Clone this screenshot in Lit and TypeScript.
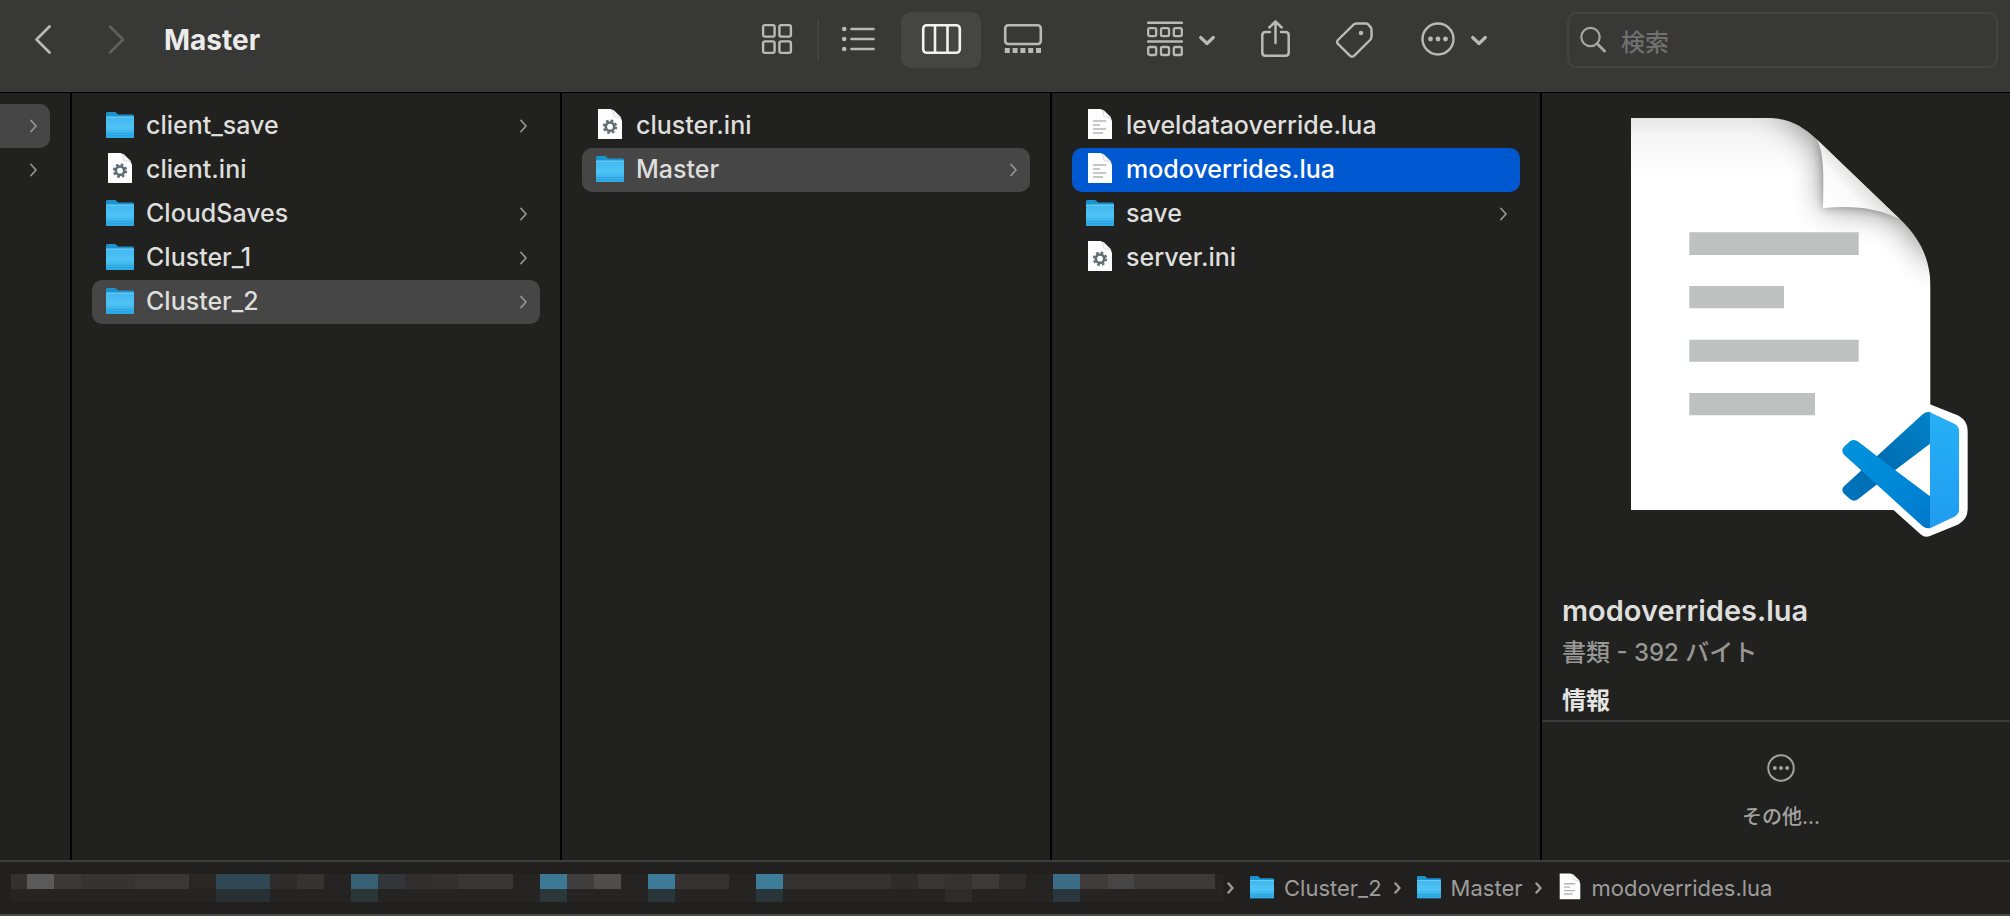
import { LitElement, html, css, svg, nothing } from "lit";
import { customElement, property, state } from "lit/decorators.js";
import { classMap } from "lit/directives/class-map.js";

type Kind = "folder" | "config" | "text";
interface Entry {
  name: string;
  kind: Kind;
}

const LIBRARY: Entry[][] = [
  [
    { name: "client_save", kind: "folder" },
    { name: "client.ini", kind: "config" },
    { name: "CloudSaves", kind: "folder" },
    { name: "Cluster_1", kind: "folder" },
    { name: "Cluster_2", kind: "folder" },
  ],
  [
    { name: "cluster.ini", kind: "config" },
    { name: "Master", kind: "folder" },
  ],
  [
    { name: "leveldataoverride.lua", kind: "text" },
    { name: "modoverrides.lua", kind: "text" },
    { name: "save", kind: "folder" },
    { name: "server.ini", kind: "config" },
  ],
];

const PATH: Entry[] = [
  { name: "Cluster_2", kind: "folder" },
  { name: "Master", kind: "folder" },
  { name: "modoverrides.lua", kind: "text" },
];

/* Redacted part of the path: start, end, colour of each tile. */
const TILES_TOP: [number, number, string][] = [
  [0, 16, "#333231"], [16, 43, "#5a5a5a"], [43, 70, "#3a3937"], [70, 124, "#353433"],
  [124, 178, "#393836"], [178, 205, "#292624"], [205, 259, "#2f4853"], [259, 286, "#2f2b2a"],
  [286, 313, "#363431"], [340, 367, "#366175"], [367, 394, "#32353a"], [394, 421, "#322e2d"],
  [421, 448, "#343230"], [448, 502, "#393735"], [529, 556, "#3d7995"], [556, 583, "#3f3e3c"],
  [583, 610, "#4f4e4c"], [637, 664, "#3c7a98"], [664, 718, "#353230"], [745, 772, "#3d7d97"],
  [772, 880, "#353331"], [880, 907, "#2f2b2a"], [907, 934, "#373634"], [934, 961, "#343331"],
  [961, 988, "#3c3b39"], [988, 1015, "#302d2b"], [1042, 1069, "#3d6d86"], [1069, 1097, "#3e3b39"],
  [1097, 1123, "#454545"], [1123, 1204, "#3c3b39"],
];
const TILES_BOTTOM: [number, number, string][] = [
  [205, 259, "#273033"], [340, 367, "#2b3637"], [529, 556, "#2a383c"], [637, 664, "#28363a"],
  [745, 772, "#28363a"], [934, 961, "#2e2c2a"], [1042, 1069, "#2b373e"],
];

const folderArt = svg`
  <path d="M0 33V9.500Q0 8 1.500 8H8.500Q9.500 8 10.300 8.800L12 10.500H26.500Q28 10.500 28 12V33Q28 34 27 34H1Q0 34 0 33Z" fill="#1c93cf"/>
  <path d="M0 13.600Q0 12.600 1 12.600H27Q28 12.600 28 13.600V33Q28 34 27 34H1Q0 34 0 33Z" fill="url(#face)"/>
  <path d="M0 13.200H28" stroke="#7fd6fb" stroke-width=".8"/>
  <path d="M0 29.500H28M0 31.500H28" stroke="#2ba0dc" stroke-width=".8"/>
  <defs><linearGradient id="face" x1="0" y1="0" x2="0" y2="1">
    <stop offset="0" stop-color="#40b6ee"/><stop offset=".5" stop-color="#50c4f6"/><stop offset="1" stop-color="#2ba8e3"/>
  </linearGradient></defs>`;
const sheetArt = svg`
  <path d="M2 5H14.500L18 6.500L24.500 13L26 17V35H2Z" fill="#fdfdfd"/>
  <path d="M16 5.700L17.500 12.500L25.300 14.500L24.500 13L18 6.500Z" fill="#d4d4d4"/>
  <path d="M17.300 6.300L18 12L24.700 13.300Z" fill="#f6f6f6"/>`;
const configArt = svg`${sheetArt}
  <circle cx="14" cy="22.700" r="4.200" fill="none" stroke="#5e6b70" stroke-width="2.600"/>
  <circle cx="14" cy="22.700" r="6.200" fill="none" stroke="#5e6b70" stroke-width="2" stroke-dasharray="2.600 2.269"/>`;
const textArt = svg`${sheetArt}
  <path d="M7 17H20M7 21H14M7 25H20M7 29H17" stroke="#b4b6b5" stroke-width="1.600"/>`;

const art = (kind: Kind) => (kind === "folder" ? folderArt : kind === "config" ? configArt : textArt);

const chevron = html`<svg class="chevron" width="7" height="14" viewBox="0 0 7 14" aria-hidden="true">
  <path d="M1 1.500L6 7L1 12.500" fill="none" stroke="currentColor" stroke-width="1.700" stroke-linecap="round" stroke-linejoin="round"/>
</svg>`;

const moreArt = svg`
  <circle cx="17" cy="17" r="15.500" fill="none" stroke="currentColor" stroke-width="2.400"/>
  <circle cx="9.500" cy="17" r="2.400" fill="currentColor"/><circle cx="17" cy="17" r="2.400" fill="currentColor"/><circle cx="24.500" cy="17" r="2.400" fill="currentColor"/>`;

const downArt = html`<svg width="16" height="40" viewBox="0 0 16 40" aria-hidden="true">
  <path d="M1.700 17.500L8 23.500L14.300 17.500" fill="none" stroke="currentColor" stroke-width="3.200" stroke-linecap="round" stroke-linejoin="round"/>
</svg>`;

@customElement("file-column")
class FileColumn extends LitElement {
  @property({ attribute: false }) entries: Entry[] = [];
  @property() chosen = "";
  @property({ type: Boolean }) active = false;

  static styles = css`
    :host { display: block; min-width: 0; padding: 11px 20px 0; }
    ul { list-style: none; margin: 0; padding: 0; }
    .row {
      display: flex; align-items: center; gap: 12px; box-sizing: border-box;
      width: 100%; height: 44px; padding: 0 13px 0 14px;
      border: 0; border-radius: 10px; background: none; color: #dededd;
      font: 500 25px/42px Inter, "Noto Sans CJK JP", sans-serif; text-align: left;
    }
    .row.on { background: #464646; }
    .row.on.active { background: #0058d0; color: #fff; }
    .glyph { flex: none; }
    .name { flex: 1; min-width: 0; padding-bottom: 2px; overflow: hidden; text-overflow: ellipsis; white-space: nowrap; }
    .chevron { flex: none; color: #969695; }
  `;

  render() {
    return html`<ul>
      ${this.entries.map((e) => {
        const on = e.name === this.chosen;
        return html`<li><button class=${classMap({ row: true, on, active: on && this.active })} @click=${() => (this.chosen = e.name)}>
          <svg class="glyph" width="28" height="44" viewBox="0 0 28 44" aria-hidden="true">${art(e.kind)}</svg>
          <span class="name">${e.name}</span>
          ${e.kind === "folder" ? chevron : nothing}
        </button></li>`;
      })}
    </ul>`;
  }
}

@customElement("file-preview")
class FilePreview extends LitElement {
  static styles = css`
    :host { display: flex; flex-direction: column; min-width: 0; overflow: hidden; }
    .art { display: block; width: 400px; max-width: 100%; margin: 0 auto; }
    .picture { padding-left: 10px; }
    .info { flex: 1; padding: 0 20px; color: #dededd; }
    h2, h3, p { margin: 0; font: 500 24px/36px Inter, "Noto Sans CJK JP", sans-serif; white-space: nowrap; }
    h2 { margin-top: 50px; font-size: 29px; font-weight: 600; }
    p { margin-top: 6px; color: #979796; }
    h3 { margin-top: 12px; font-weight: 700; color: #e4e4e3; }
    .actions { display: flex; justify-content: center; box-sizing: border-box; height: 140px; padding: 32px 0 0 10px; border-top: 2px solid #3a3a38; }
    .more {
      display: flex; flex-direction: column; align-items: center; gap: 20px; align-self: flex-start;
      padding: 0; border: 0; background: none; color: #a2a2a1;
      font: 500 20px/30px Inter, "Noto Sans CJK JP", sans-serif;
    }
  `;

  render() {
    return html`
      <div class="picture">
        <svg class="art" viewBox="123 9 1200 1350" role="img" aria-label="modoverrides.lua">
          <defs>
            <linearGradient id="top" x1="0" y1="84" x2="0" y2="260" gradientUnits="userSpaceOnUse">
              <stop offset="0" stop-color="#e6e6e6"/><stop offset=".3" stop-color="#f5f5f5"/><stop offset="1" stop-color="#fff"/>
            </linearGradient>
            <linearGradient id="curl" x1="850" y1="355" x2="960" y2="255" gradientUnits="userSpaceOnUse">
              <stop offset="0" stop-color="#fff"/><stop offset=".6" stop-color="#fafafa"/><stop offset="1" stop-color="#dcdcdc"/>
            </linearGradient>
            <linearGradient id="back" x1="1160" y1="970" x2="920" y2="1230" gradientUnits="userSpaceOnUse">
              <stop offset="0" stop-color="#0082c8"/><stop offset=".6" stop-color="#006bb0"/><stop offset="1" stop-color="#0074bd"/>
            </linearGradient>
            <linearGradient id="front" x1="920" y1="1060" x2="1170" y2="1310" gradientUnits="userSpaceOnUse">
              <stop offset="0" stop-color="#0092dc"/><stop offset=".6" stop-color="#0086d6"/><stop offset="1" stop-color="#0077c8"/>
            </linearGradient>
            <linearGradient id="side" x1="0" y1="0" x2="0" y2="1">
              <stop offset="0" stop-color="#27b0f6"/><stop offset="1" stop-color="#1f9cf0"/>
            </linearGradient>
            <filter id="soft" x="-50%" y="-50%" width="200%" height="200%"><feGaussianBlur stdDeviation="48"/></filter>
            <filter id="tight" x="-50%" y="-50%" width="200%" height="200%"><feGaussianBlur stdDeviation="12"/></filter>
            <clipPath id="page"><path d="M273 84H680C745 84 785 106 830 148L1080 388C1150 455 1172 520 1172 600V1261H273Z"/></clipPath>
          </defs>
          <g clip-path="url(#page)">
            <path d="M273 84H1172V1261H273Z" fill="url(#top)"/>
            <path d="M690 50L830 148C848 180 853 230 849 355C930 345 1010 352 1080 388L1200 540L1250 300L900 40Z" fill="#000" opacity=".46" filter="url(#soft)"/>
            <path d="M830 148C848 180 853 230 849 355C930 345 1010 352 1080 388Z" fill="#000" opacity=".3" filter="url(#tight)"/>
          </g>
          <path d="M830 148C848 180 853 230 849 355C930 345 1010 352 1080 388Z" fill="url(#curl)"/>
          <path d="M448 427H956V495H448ZM448 588H732V655H448ZM448 749H956V815H448ZM448 909H825V976H448Z" fill="#bec1c0"/>
          <path d="M1160 967L1243 1000Q1257 1008 1257 1022V1258Q1257 1272 1243 1280L1160 1314L1010 1180L942 1230L910 1200L965 1141L910 1082L942 1050L1010 1100Z" fill="#fff" stroke="#fff" stroke-width="52" stroke-linejoin="round"/>
          <path d="M1148 973Q1158 964 1172 967V1060L1066 1140L955 1227Q942 1237 930 1227L912 1211Q902 1200 912 1189Z" fill="url(#back)"/>
          <path d="M912 1070Q902 1082 912 1094L1148 1309Q1158 1317 1172 1314V1220L1066 1141L955 1055Q942 1046 930 1054Z" fill="url(#front)"/>
          <path d="M1170 967L1243 1001Q1257 1008 1257 1022V1260Q1257 1273 1243 1280L1170 1315Z" fill="url(#side)"/>
        </svg>
      </div>
      <div class="info">
        <h2>modoverrides.lua</h2>
        <p>書類 - 392 バイト</p>
        <h3>情報</h3>
      </div>
      <div class="actions">
        <button class="more">
          <svg width="28" height="28" viewBox="0 0 34 34" aria-hidden="true">${moreArt}</svg>
          その他...
        </button>
      </div>`;
  }
}

@customElement("app-root")
class AppRoot extends LitElement {
  @state() private view = "columns";

  static styles = css`
    :host {
      display: flex; flex-direction: column; box-sizing: border-box; min-height: 100vh;
      background: #21211f; color: #dededd; border-bottom: 2px solid #494946;
      font: 500 25px/36px Inter, "Noto Sans CJK JP", sans-serif;
    }
    button { padding: 0; border: 0; background: none; color: #b9b9b7; display: flex; align-items: center; justify-content: center; }
    svg { display: block; flex: none; }
    .toolbar {
      display: flex; align-items: center; box-sizing: border-box; height: 93px;
      padding: 0 12px 12px 34px; background: #383836; border-bottom: 1px solid #000;
    }
    .nav { display: flex; gap: 56px; padding-right: 38px; }
    .nav .forward { color: #60605e; }
    h1 { flex: 1; margin: 0; padding-bottom: 1px; font-size: 28px; font-weight: 700; color: #ebebea; white-space: nowrap; }
    .views { display: flex; align-items: center; margin-right: 84px; }
    .view { width: 80px; height: 56px; border-radius: 10px; margin-right: 2px; }
    .view:last-child { margin-right: 0; }
    .view.on { background: #454543; color: #f2f2f1; }
    .rule { width: 2px; height: 40px; background: #454543; margin-left: -2px; }
    .tools { display: flex; align-items: center; gap: 46px; margin-right: 80px; }
    .menu { gap: 16px; }
    .search {
      display: flex; align-items: center; gap: 15px; box-sizing: border-box; width: 431px; height: 56px;
      padding: 0 11px; border: 2px solid #434341; border-radius: 10px; color: #a5a5a4;
    }
    input { flex: 1; min-width: 0; padding: 5px 0 0; border: 0; outline: 0; background: none; color: #dededd; font: inherit; font-size: 24px; }
    input::placeholder { color: #70706f; opacity: 1; }
    .columns { flex: 1; display: grid; grid-template-columns: 72px repeat(3, minmax(0, 490fr)) minmax(0, 468fr); }
    .edge, file-column { border-right: 2px solid #000; }
    .edge { padding: 11px 20px 0 0; }
    .stub { width: 100%; height: 44px; padding-right: 13px; justify-content: flex-end; border-radius: 0 10px 10px 0; color: #969695; }
    .stub.on { background: #464646; }
    .path {
      display: flex; align-items: center; box-sizing: border-box; height: 54px; padding: 0 11px;
      border-top: 2px solid #3f3e3c; background: #22201e; color: #9d9c9a; overflow: hidden;
    }
    .path ol { display: flex; margin: 0; padding: 0; list-style: none; }
    .path li { display: flex; align-items: center; }
    .crumb { display: flex; align-items: center; gap: 10px; padding: 0 12px 0 16px; color: inherit; text-decoration: none; font-size: 22px; font-weight: 400; line-height: 30px; white-space: nowrap; }
  `;

  private readonly views = [
    { id: "icons", label: "アイコン", art: svg`<g fill="none" stroke="currentColor" stroke-width="2.400"><rect x="26.100" y="13.100" width="11.500" height="11.500" rx="1.800"/><rect x="42.400" y="13.100" width="11.500" height="11.500" rx="1.800"/><rect x="26.100" y="29.400" width="11.500" height="11.500" rx="1.800"/><rect x="42.400" y="29.400" width="11.500" height="11.500" rx="1.800"/></g>` },
    { id: "list", label: "リスト", art: svg`<g fill="currentColor"><circle cx="25.200" cy="17" r="2.300"/><circle cx="25.200" cy="27" r="2.300"/><circle cx="25.200" cy="37" r="2.300"/></g>
      <path d="M32.500 17H54.500M32.500 27H54.500M32.500 37H54.500" stroke="currentColor" stroke-width="2.600" stroke-linecap="round"/>` },
    { id: "columns", label: "カラム", art: svg`<g fill="none" stroke="currentColor" stroke-width="2.600"><rect x="22.200" y="13.200" width="36.600" height="27.600" rx="3.500"/><path d="M34 13V41M46.500 13V41"/></g>` },
    { id: "gallery", label: "ギャラリー", art: svg`<rect x="22.200" y="13.200" width="35.600" height="18.800" rx="3" fill="none" stroke="currentColor" stroke-width="2.600"/>
      <path d="M21.800 36h5v5h-5zM29.600 36h5v5h-5zM37.400 36h5v5h-5zM45.200 36h5v5h-5zM53 36h5v5h-5z" fill="currentColor"/>` },
  ];

  render() {
    return html`
      <header class="toolbar">
        <div class="nav">
          <button class="back" aria-label="戻る"><svg width="18" height="30" viewBox="0 0 18 30"><path d="M15.500 1.500L2.500 14.500L15.500 27.500" fill="none" stroke="currentColor" stroke-width="2.700" stroke-linecap="round" stroke-linejoin="round"/></svg></button>
          <button class="forward" aria-label="進む"><svg width="18" height="30" viewBox="0 0 18 30"><path d="M2 1.500L15 14.500L2 27.500" fill="none" stroke="currentColor" stroke-width="2.500" stroke-linecap="round" stroke-linejoin="round"/></svg></button>
        </div>
        <h1>Master</h1>
        <div class="views">
          ${this.views.map((v, i) => html`
            <button class=${classMap({ view: true, on: v.id === this.view })} aria-label=${v.label} @click=${() => (this.view = v.id)}>
              <svg width="80" height="56" viewBox="0 0 80 56" aria-hidden="true">${v.art}</svg>
            </button>${i === 0 ? html`<span class="rule"></span>` : nothing}`)}
        </div>
        <div class="tools">
          <button class="menu" aria-label="グループ">
            <svg width="36" height="40" viewBox="0 0 36 40" aria-hidden="true">
              <path d="M1 2.700H35M1 21.500H35" stroke="currentColor" stroke-width="2.400" stroke-linecap="round"/>
              <g fill="none" stroke="currentColor" stroke-width="2.300"><rect x="1.200" y="8.100" width="8" height="8" rx="1.500"/><rect x="14" y="8.100" width="8" height="8" rx="1.500"/><rect x="26.800" y="8.100" width="8" height="8" rx="1.500"/><rect x="1.200" y="27" width="8" height="8" rx="1.500"/><rect x="14" y="27" width="8" height="8" rx="1.500"/><rect x="26.800" y="27" width="8" height="8" rx="1.500"/></g>
            </svg>${downArt}
          </button>
          <button aria-label="共有">
            <svg width="29" height="40" viewBox="0 0 29 40" aria-hidden="true"><path d="M9 12H4.500Q1.300 12 1.300 15.300V32.500Q1.300 35.800 4.500 35.800H24.500Q27.700 35.800 27.700 32.500V15.300Q27.700 12 24.500 12H20M14.500 23V1.800M8.300 7.500L14.500 1.500L20.700 7.500" fill="none" stroke="currentColor" stroke-width="2.500" stroke-linecap="round" stroke-linejoin="round"/></svg>
          </button>
          <button aria-label="タグ">
            <svg width="37" height="40" viewBox="0 0 38 40" aria-hidden="true"><path d="M21 3H30.500Q32 3 33 4L35.500 6.800Q36.500 8 36.500 9.500V16.500Q36.500 18.500 35 20L18.500 36.300Q16.500 38 14.500 36.300L2 24Q.3 22 2 20L18 4.300Q19.300 3 21 3Z" fill="none" stroke="currentColor" stroke-width="2.500" stroke-linejoin="round"/><circle cx="25.700" cy="12.700" r="2.300" fill="currentColor"/></svg>
          </button>
          <button class="menu" aria-label="アクション">
            <svg width="36" height="38" viewBox="-2 -1 36 38" aria-hidden="true">${moreArt}</svg>${downArt}
          </button>
        </div>
        <label class="search">
          <svg width="26" height="28" viewBox="0 0 26 28" aria-hidden="true"><circle cx="10.500" cy="11" r="9.200" fill="none" stroke="currentColor" stroke-width="2.200"/><path d="M17.200 17.700L24.500 25" stroke="currentColor" stroke-width="3" stroke-linecap="round"/></svg>
          <input type="search" placeholder="検索" aria-label="検索">
        </label>
      </header>
      <main class="columns">
        <div class="edge">
          <button class="stub on" aria-label="項目 1">${chevron}</button>
          <button class="stub" aria-label="項目 2">${chevron}</button>
        </div>
        <file-column .entries=${LIBRARY[0]} chosen="Cluster_2"></file-column>
        <file-column .entries=${LIBRARY[1]} chosen="Master"></file-column>
        <file-column .entries=${LIBRARY[2]} chosen="modoverrides.lua" active></file-column>
        <file-preview></file-preview>
      </main>
      <nav class="path" aria-label="パス">
        <svg width="1216" height="30" viewBox="0 0 1216 30" aria-hidden="true">
          <rect y="1" width="1212" height="28" fill="#252422"/>
          ${TILES_TOP.map(([a, b, c]) => svg`<rect x=${a} y="1" width=${b - a} height="15" fill=${c}/>`)}
          ${TILES_BOTTOM.map(([a, b, c]) => svg`<rect x=${a} y="16" width=${b - a} height="13" fill=${c}/>`)}
        </svg>
        <ol>
          ${PATH.map((e) => html`<li>
            <svg width="7" height="12" viewBox="0 0 7 12" aria-hidden="true"><path d="M1.500 1.500L5.500 6L1.500 10.500" fill="none" stroke="currentColor" stroke-width="2.400" stroke-linecap="round" stroke-linejoin="round"/></svg>
            <a class="crumb" href="#${e.name}">
              <svg width="24" height="38" viewBox="0 0 28 44" aria-hidden="true">${art(e.kind)}</svg>${e.name}
            </a>
          </li>`)}
        </ol>
      </nav>`;
  }
}
